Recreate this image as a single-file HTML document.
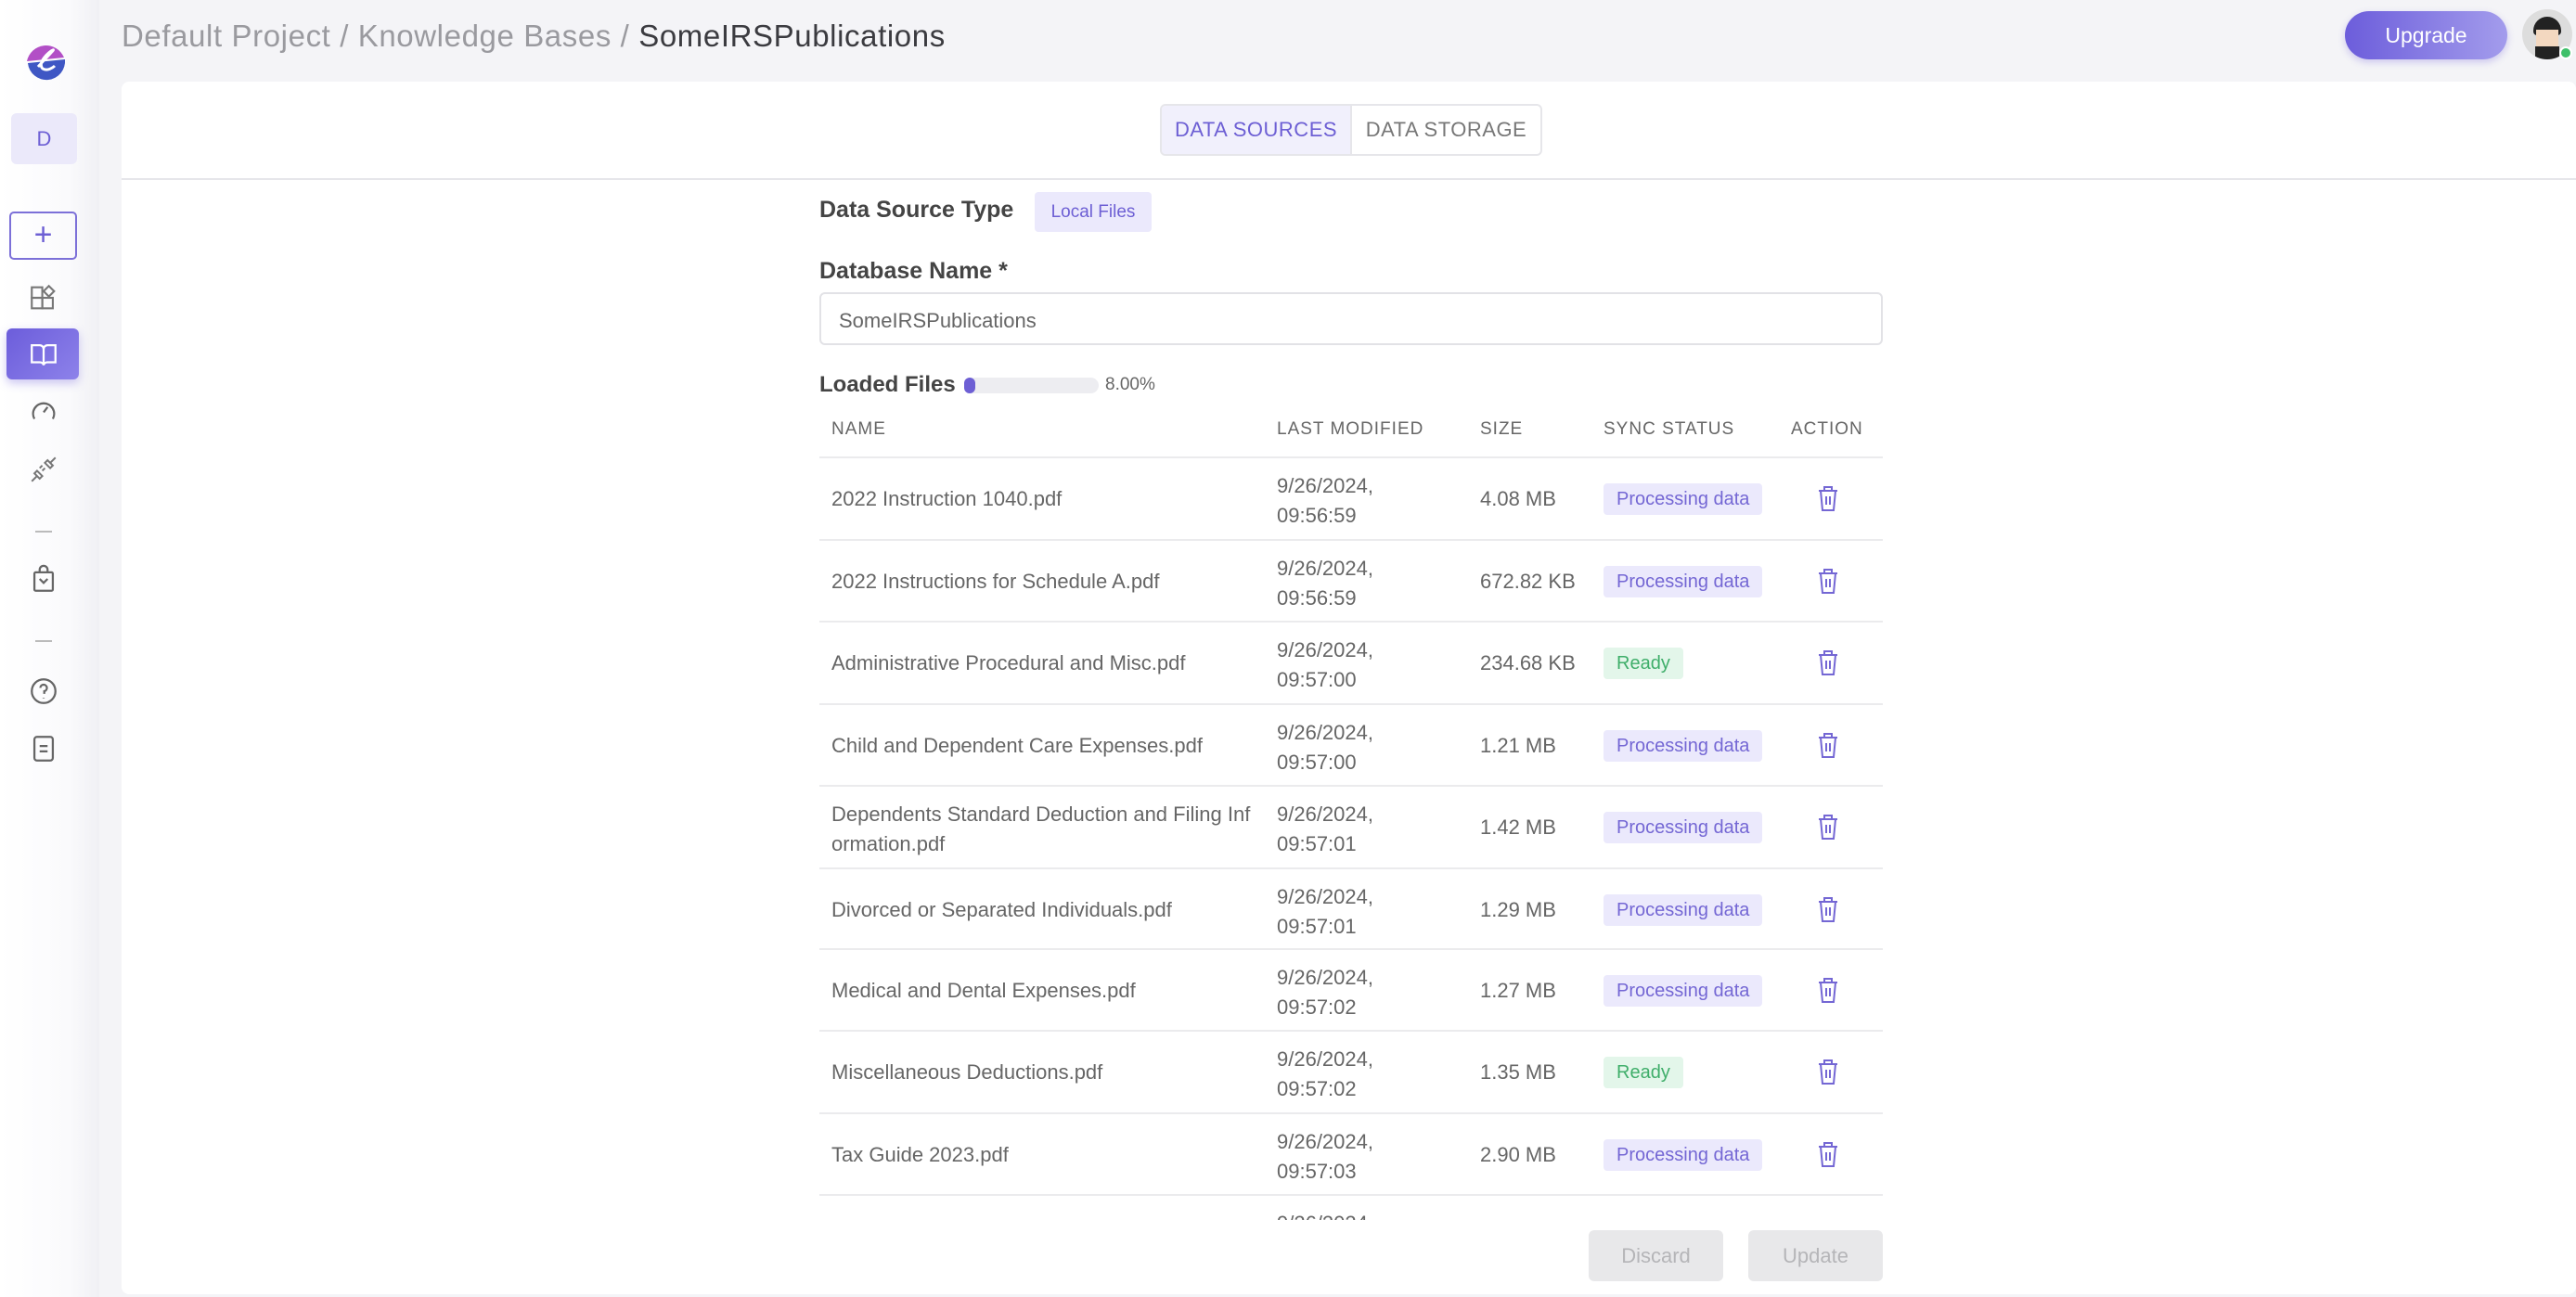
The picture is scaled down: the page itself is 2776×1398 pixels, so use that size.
<!DOCTYPE html>
<html><head><meta charset="utf-8"><style>
*{box-sizing:border-box;margin:0;padding:0}
body{width:2776px;height:1398px;overflow:hidden;background:#f4f4f7;font-family:"Liberation Sans",sans-serif;position:relative;color:#555}
.abs{position:absolute}
.side{left:0;top:0;width:107px;height:1398px;background:linear-gradient(90deg,#fff 0%,#fafafc 70%,#f0f0f4 100%)}
.ic{position:absolute;left:30px;width:34px;height:34px}
.card{left:131px;top:88px;width:2645px;height:1307px;background:#fff;border-radius:8px}
.crumb{left:131px;top:20px;font-size:33px;color:#9a9a9f;letter-spacing:.6px}
.crumb b{font-weight:normal;color:#3b3b40}
.tabs{left:1250px;top:112px;width:412px;height:56px;border:2px solid #e6e6ea;border-radius:6px;display:flex;overflow:hidden}
.tabs div{flex:1;display:flex;align-items:center;justify-content:center;font-size:22px;letter-spacing:.5px;color:#777}
.tabs div:first-child{background:#f1f0fc;color:#6d5fd4;border-right:2px solid #e6e6ea;flex:0 0 205px}
.lbl{font-size:25px;color:#444;font-weight:bold}
.row{position:absolute;left:883px;width:1146px;height:88px;border-top:2px solid #ebebed;font-size:22px;color:#666}
.row span,.row svg{position:absolute}
.c1{left:13px;top:31px}
.c2{left:493px;top:14px;line-height:32px}
.c3{left:712px;top:31px}
.bdg{left:845px;top:27px;height:34px;line-height:34px;padding:0 14px;border-radius:4px;font-size:20px}
.p{background:#ebe9fc;color:#7467d4}
.r{background:#e3f6ea;color:#3fae6a}
.tr{left:1075px;top:29px}
</style></head><body>
<div class="abs side"></div>
<svg class="abs" style="left:24px;top:40px" width="50" height="50" viewBox="0 0 50 50">
<path d="M5 26 A21 21 0 0 1 45 22 L5 26Z" fill="#b24fc6"/>
<path d="M6 28 L46 24 A20 20 0 0 1 6 28Z" fill="#3f57c4"/>
<path d="M17 32 C24 24 36 12 33 14 C28 16 16 28 22 34 C27 37 33 33 35 31" stroke="#fff" stroke-width="3" fill="none"/>
</svg>
<div class="abs" style="left:12px;top:122px;width:71px;height:55px;background:#ebe9fa;border-radius:6px;color:#6d5fd4;font-size:22px;text-align:center;line-height:55px">D</div>
<div class="abs" style="left:10px;top:228px;width:73px;height:52px;border:2px solid #7c70d8;border-radius:5px;color:#6d5fd4;font-size:34px;text-align:center;line-height:46px">+</div>
<svg class="ic" style="top:304px" viewBox="0 0 24 24" fill="none" stroke="#777" stroke-width="1.5"><rect x="3" y="4" width="8" height="8"/><rect x="3" y="12" width="8" height="8"/><rect x="11" y="12" width="8" height="8"/><path d="M16 3l4 4-4 4-4-4z"/></svg>
<div class="abs" style="left:7px;top:354px;width:78px;height:55px;border-radius:6px;background:linear-gradient(135deg,#6c5ddb,#8d82ea);box-shadow:0 4px 10px rgba(108,93,219,.35)"></div>
<svg class="ic" style="top:365px" viewBox="0 0 24 24" fill="none" stroke="#fff" stroke-width="1.6"><path d="M3 5h6a3 3 0 0 1 3 3v12a3 3 0 0 0-3-2H3zM21 5h-6a3 3 0 0 0-3 3v12a3 3 0 0 1 3-2h6z"/></svg>
<svg class="ic" style="top:426px" viewBox="0 0 24 24" fill="none" stroke="#666" stroke-width="1.6"><path d="M5 18A8 8 0 1 1 19 18"/><path d="M12 13l3-4"/></svg>
<svg class="ic" style="top:489px" viewBox="0 0 24 24" fill="none" stroke="#777" stroke-width="1.4"><path d="M3 21l4-4M17 7l4-4M7 13l4 4-2 2-4-4zM13 7l4 4 2-2-4-4zM9 11l2-2M11 13l2-2"/></svg>
<div class="abs" style="left:38px;top:572px;width:18px;height:2px;background:#bbb"></div>
<svg class="ic" style="top:607px" viewBox="0 0 24 24" fill="none" stroke="#666" stroke-width="1.6"><rect x="5" y="7" width="14" height="14" rx="1"/><path d="M9 7V5a3 3 0 0 1 6 0v2M9 12l3 3 3-3"/></svg>
<div class="abs" style="left:38px;top:690px;width:18px;height:2px;background:#bbb"></div>
<svg class="ic" style="top:728px" viewBox="0 0 24 24" fill="none" stroke="#666" stroke-width="1.6"><circle cx="12" cy="12" r="9"/><path d="M9.5 9.5a2.5 2.5 0 1 1 3 2.5v2M12 17v.5"/></svg>
<svg class="ic" style="top:790px" viewBox="0 0 24 24" fill="none" stroke="#666" stroke-width="1.6"><rect x="5" y="3" width="14" height="18" rx="2"/><path d="M9 10h6M9 14h6"/></svg>

<div class="abs crumb">Default Project / Knowledge Bases / <b>SomeIRSPublications</b></div>
<div class="abs" style="left:2527px;top:12px;width:175px;height:52px;border-radius:26px;background:linear-gradient(90deg,#6c5ddb,#a39cec);color:#fff;font-size:23px;text-align:center;line-height:52px;box-shadow:0 3px 8px rgba(108,93,219,.3)">Upgrade</div>
<div class="abs" style="left:2718px;top:10px;width:54px;height:54px;border-radius:50%;background:#ddd;overflow:hidden">
<div style="position:absolute;left:12px;top:8px;width:30px;height:20px;background:#222;border-radius:15px 15px 4px 4px"></div>
<div style="position:absolute;left:15px;top:22px;width:24px;height:18px;background:#f3d8c0"></div>
<div style="position:absolute;left:14px;top:40px;width:26px;height:14px;background:#222"></div></div>
<div class="abs" style="left:2758px;top:50px;width:14px;height:14px;border-radius:50%;background:#3fc06a;border:2px solid #fff"></div>

<div class="abs card"></div>
<div class="abs tabs"><div>DATA SOURCES</div><div>DATA STORAGE</div></div>
<div class="abs" style="left:131px;top:192px;width:2645px;height:2px;background:#e6e6ea"></div>

<div class="abs lbl" style="left:883px;top:212px">Data Source Type</div>
<div class="abs" style="left:1115px;top:207px;width:126px;height:43px;background:#ebe9fc;border-radius:4px;color:#6d5fd4;font-size:19px;text-align:center;line-height:43px">Local Files</div>
<div class="abs lbl" style="left:883px;top:278px">Database Name *</div>
<div class="abs" style="left:883px;top:315px;width:1146px;height:57px;border:2px solid #e2e2e6;border-radius:6px;font-size:22px;color:#666;padding:16px 0 0 19px">SomeIRSPublications</div>
<div class="abs lbl" style="left:883px;top:401px;font-size:24px">Loaded Files</div>
<div class="abs" style="left:1039px;top:407px;width:145px;height:17px;background:#ededf1;border-radius:9px"><div style="width:12px;height:17px;background:#6d5fd4;border-radius:6px"></div></div>
<div class="abs" style="left:1191px;top:404px;font-size:19px;color:#666">8.00%</div>

<div class="abs" style="left:883px;top:452px;width:1146px;font-size:19px;color:#666;letter-spacing:1px">
<span class="abs" style="left:13px">NAME</span><span class="abs" style="left:493px">LAST MODIFIED</span><span class="abs" style="left:712px">SIZE</span><span class="abs" style="left:845px">SYNC STATUS</span><span class="abs" style="left:1047px">ACTION</span></div>

<div class="abs" style="left:0;top:0;width:2776px;height:1315px;overflow:hidden">
<div class="row" style="top:492px"><span class="c1">2022 Instruction 1040.pdf</span><span class="c2">9/26/2024,<br>09:56:59</span><span class="c3">4.08 MB</span><span class="bdg p">Processing data</span><svg class="tr" width="24" height="30" viewBox="0 0 24 30" fill="none" stroke="#7467d4" stroke-width="2"><path d="M8 5V2h8v3M2 6h20M4 6l2 21h12l2-21M10 12v9M14 12v9"/></svg></div>
<div class="row" style="top:581px"><span class="c1">2022 Instructions for Schedule A.pdf</span><span class="c2">9/26/2024,<br>09:56:59</span><span class="c3">672.82 KB</span><span class="bdg p">Processing data</span><svg class="tr" width="24" height="30" viewBox="0 0 24 30" fill="none" stroke="#7467d4" stroke-width="2"><path d="M8 5V2h8v3M2 6h20M4 6l2 21h12l2-21M10 12v9M14 12v9"/></svg></div>
<div class="row" style="top:669px"><span class="c1">Administrative Procedural and Misc.pdf</span><span class="c2">9/26/2024,<br>09:57:00</span><span class="c3">234.68 KB</span><span class="bdg r">Ready</span><svg class="tr" width="24" height="30" viewBox="0 0 24 30" fill="none" stroke="#7467d4" stroke-width="2"><path d="M8 5V2h8v3M2 6h20M4 6l2 21h12l2-21M10 12v9M14 12v9"/></svg></div>
<div class="row" style="top:758px"><span class="c1">Child and Dependent Care Expenses.pdf</span><span class="c2">9/26/2024,<br>09:57:00</span><span class="c3">1.21 MB</span><span class="bdg p">Processing data</span><svg class="tr" width="24" height="30" viewBox="0 0 24 30" fill="none" stroke="#7467d4" stroke-width="2"><path d="M8 5V2h8v3M2 6h20M4 6l2 21h12l2-21M10 12v9M14 12v9"/></svg></div>
<div class="row" style="top:846px"><span class="c1" style="top:14px;line-height:32px">Dependents Standard Deduction and Filing Inf<br>ormation.pdf</span><span class="c2">9/26/2024,<br>09:57:01</span><span class="c3">1.42 MB</span><span class="bdg p">Processing data</span><svg class="tr" width="24" height="30" viewBox="0 0 24 30" fill="none" stroke="#7467d4" stroke-width="2"><path d="M8 5V2h8v3M2 6h20M4 6l2 21h12l2-21M10 12v9M14 12v9"/></svg></div>
<div class="row" style="top:935px"><span class="c1">Divorced or Separated Individuals.pdf</span><span class="c2">9/26/2024,<br>09:57:01</span><span class="c3">1.29 MB</span><span class="bdg p">Processing data</span><svg class="tr" width="24" height="30" viewBox="0 0 24 30" fill="none" stroke="#7467d4" stroke-width="2"><path d="M8 5V2h8v3M2 6h20M4 6l2 21h12l2-21M10 12v9M14 12v9"/></svg></div>
<div class="row" style="top:1022px"><span class="c1">Medical and Dental Expenses.pdf</span><span class="c2">9/26/2024,<br>09:57:02</span><span class="c3">1.27 MB</span><span class="bdg p">Processing data</span><svg class="tr" width="24" height="30" viewBox="0 0 24 30" fill="none" stroke="#7467d4" stroke-width="2"><path d="M8 5V2h8v3M2 6h20M4 6l2 21h12l2-21M10 12v9M14 12v9"/></svg></div>
<div class="row" style="top:1110px"><span class="c1">Miscellaneous Deductions.pdf</span><span class="c2">9/26/2024,<br>09:57:02</span><span class="c3">1.35 MB</span><span class="bdg r">Ready</span><svg class="tr" width="24" height="30" viewBox="0 0 24 30" fill="none" stroke="#7467d4" stroke-width="2"><path d="M8 5V2h8v3M2 6h20M4 6l2 21h12l2-21M10 12v9M14 12v9"/></svg></div>
<div class="row" style="top:1199px"><span class="c1">Tax Guide 2023.pdf</span><span class="c2">9/26/2024,<br>09:57:03</span><span class="c3">2.90 MB</span><span class="bdg p">Processing data</span><svg class="tr" width="24" height="30" viewBox="0 0 24 30" fill="none" stroke="#7467d4" stroke-width="2"><path d="M8 5V2h8v3M2 6h20M4 6l2 21h12l2-21M10 12v9M14 12v9"/></svg></div>
<div class="row" style="top:1287px"><span class="c2">9/26/2024,<br>09:57:03</span></div>
</div>

<div class="abs" style="left:1712px;top:1326px;width:145px;height:55px;background:#e8e8ea;border-radius:6px;color:#b5b5b8;font-size:22px;text-align:center;line-height:55px">Discard</div>
<div class="abs" style="left:1884px;top:1326px;width:145px;height:55px;background:#e8e8ea;border-radius:6px;color:#b5b5b8;font-size:22px;text-align:center;line-height:55px">Update</div>
</body></html>
